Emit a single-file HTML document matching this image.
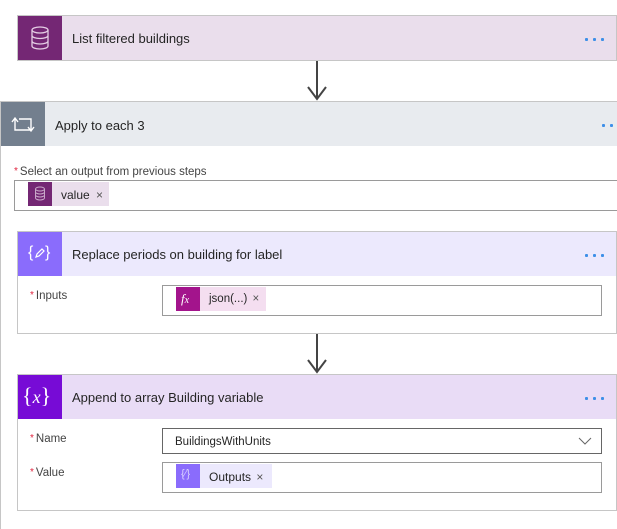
<!DOCTYPE html>
<html><head><style>
html,body{margin:0;width:617px;height:529px;overflow:hidden}
body{background:#fff;position:relative;font-family:"Liberation Sans",sans-serif;color:#252525}
.a{position:absolute;box-sizing:border-box}
.t{font-size:13px;position:absolute;white-space:nowrap}
.dots{position:absolute;font-size:0}
.dots i{position:absolute;width:3px;height:3px;background:#3d8fe8;top:0;border-radius:1px}
.lbl{font-size:11.5px;color:#444;position:absolute}
.lbl b{color:#e0233e;font-weight:normal;font-size:10px;vertical-align:top;margin-right:2px}
.box{position:absolute;box-sizing:border-box;border:1px solid #9a9a9a;background:#fff}
.arrow{position:absolute;width:2px;background:#444}
</style></head><body>
<div class="a" style="left:17px;top:15px;width:600px;height:46px;background:#eadeec;border:1px solid #c6c6c6"></div>
<div class="a" style="left:18px;top:16px;width:44px;height:44px;background:#742774"></div>
<svg class="a" style="left:28px;top:25px" width="24" height="26" viewBox="0 0 24 26" fill="none" stroke="#e4cde4" stroke-width="1.3"><ellipse cx="12" cy="5" rx="8" ry="3"/><path d="M4 5v16c0 1.7 3.6 3 8 3s8-1.3 8-3V5M4 10.5c0 1.7 3.6 3 8 3s8-1.3 8-3M4 16c0 1.7 3.6 3 8 3s8-1.3 8-3"/></svg>
<div class="t" style="left:72px;top:31px">List filtered buildings</div>
<div class="dots" style="left:585px;top:38px"><i style="left:0"></i><i style="left:8px"></i><i style="left:16px"></i></div>
<div class="arrow" style="left:316px;top:61px;height:38px"></div>
<svg class="a" style="left:307px;top:86px" width="20" height="15"><path d="M1 1l9 12 9-12" stroke="#444" stroke-width="2" fill="none"/></svg>
<div class="a" style="left:0;top:101px;width:617px;height:428px;border:1px solid #c6c6c6;border-right:none;border-bottom:none"></div>
<div class="a" style="left:1px;top:102px;width:616px;height:44px;background:#e8ebef"></div>
<div class="a" style="left:1px;top:102px;width:44px;height:44px;background:#737f8e"></div>
<svg class="a" style="left:10px;top:113px" width="26" height="22" fill="none" stroke="#fff" stroke-width="1.4"><path d="M5 6v11h16M2 9l3-4 3 4M21 17V6H9M18 14l3 4 3-4"/></svg>
<div class="t" style="left:55px;top:118px">Apply to each 3</div>
<div class="dots" style="left:602px;top:124px"><i style="left:0"></i><i style="left:8px"></i></div>
<div class="lbl" style="left:14px;top:166px"><b>*</b>Select an output from previous steps</div>
<div class="box" style="left:14px;top:180px;width:603px;height:31px;border-right:none"></div>
<div class="a" style="left:28px;top:182px;width:81px;height:24px;background:#eadeec"></div>
<div class="a" style="left:28px;top:182px;width:24px;height:24px;background:#742774"></div>
<svg class="a" style="left:34px;top:186px" width="12" height="15" fill="none" stroke="#c9a8c9" stroke-width="1"><ellipse cx="6" cy="3" rx="4.5" ry="2"/><path d="M1.5 3v9c0 1 2 2 4.5 2s4.5-1 4.5-2V3M1.5 6c0 1 2 2 4.5 2s4.5-1 4.5-2M1.5 9c0 1 2 2 4.5 2s4.5-1 4.5-2"/></svg>
<div class="t" style="left:61px;top:188px;font-size:12px">value <span style="color:#555;margin-left:3px">×</span></div>
<div class="a" style="left:17px;top:231px;width:600px;height:103px;border:1px solid #c6c6c6;background:#fff"></div>
<div class="a" style="left:18px;top:232px;width:598px;height:44px;background:#ece9fd"></div>
<div class="a" style="left:18px;top:232px;width:44px;height:44px;background:#8a6cfc"></div>
<div class="t" style="left:28px;top:244px;color:#fff;font-size:16px">{</div><div class="t" style="left:45px;top:244px;color:#fff;font-size:16px">}</div>
<svg class="a" style="left:34px;top:247px" width="12" height="12" fill="none" stroke="#fff" stroke-width="1.2"><path d="M2 10l1-3 5-5 2 2-5 5z"/></svg>
<div class="t" style="left:72px;top:247px">Replace periods on building for label</div>
<div class="dots" style="left:585px;top:254px"><i style="left:0"></i><i style="left:8px"></i><i style="left:16px"></i></div>
<div class="lbl" style="left:30px;top:290px"><b>*</b>Inputs</div>
<div class="box" style="left:162px;top:285px;width:440px;height:31px"></div>
<div class="a" style="left:176px;top:287px;width:90px;height:24px;background:#f4def0"></div>
<div class="a" style="left:176px;top:287px;width:24px;height:24px;background:#a3148c"></div>
<div class="t" style="left:181px;top:291px;color:#fff;font-family:'Liberation Serif',serif;font-style:italic;font-size:13px">f<span style="font-size:10px">x</span></div>
<div class="t" style="left:209px;top:293px;font-size:11.5px">json(...) <span style="color:#555;margin-left:2px">×</span></div>
<div class="arrow" style="left:316px;top:334px;height:37px"></div>
<svg class="a" style="left:307px;top:359px" width="20" height="15"><path d="M1 1l9 12 9-12" stroke="#444" stroke-width="2" fill="none"/></svg>
<div class="a" style="left:17px;top:374px;width:600px;height:137px;border:1px solid #c6c6c6;background:#fff"></div>
<div class="a" style="left:18px;top:375px;width:598px;height:44px;background:#e9dcf6"></div>
<div class="a" style="left:18px;top:375px;width:44px;height:44px;background:#770bd6"></div>
<div class="t" style="left:22px;top:383px;color:#fff;font-family:'Liberation Serif',serif;font-size:22px">{<i style="font-size:18px">x</i>}</div>
<div class="t" style="left:72px;top:390px">Append to array Building variable</div>
<div class="dots" style="left:585px;top:397px"><i style="left:0"></i><i style="left:8px"></i><i style="left:16px"></i></div>
<div class="lbl" style="left:30px;top:433px"><b>*</b>Name</div>
<div class="box" style="left:162px;top:428px;width:440px;height:26px;border-color:#666"></div>
<div class="t" style="left:175px;top:436px;font-size:11.5px">BuildingsWithUnits</div>
<svg class="a" style="left:578px;top:437px" width="14" height="9" fill="none" stroke="#666" stroke-width="1"><path d="M1 1l6 6 6-6"/></svg>
<div class="lbl" style="left:30px;top:467px"><b>*</b>Value</div>
<div class="box" style="left:162px;top:462px;width:440px;height:31px"></div>
<div class="a" style="left:176px;top:464px;width:96px;height:24px;background:#ece9fd"></div>
<div class="a" style="left:176px;top:464px;width:24px;height:24px;background:#8a6cfc"></div>
<div class="t" style="left:181px;top:468px;color:#d8cffe;font-size:11px">{⁄}</div>
<div class="t" style="left:209px;top:470px;font-size:12px">Outputs <span style="color:#555;margin-left:2px">×</span></div>
</body></html>
